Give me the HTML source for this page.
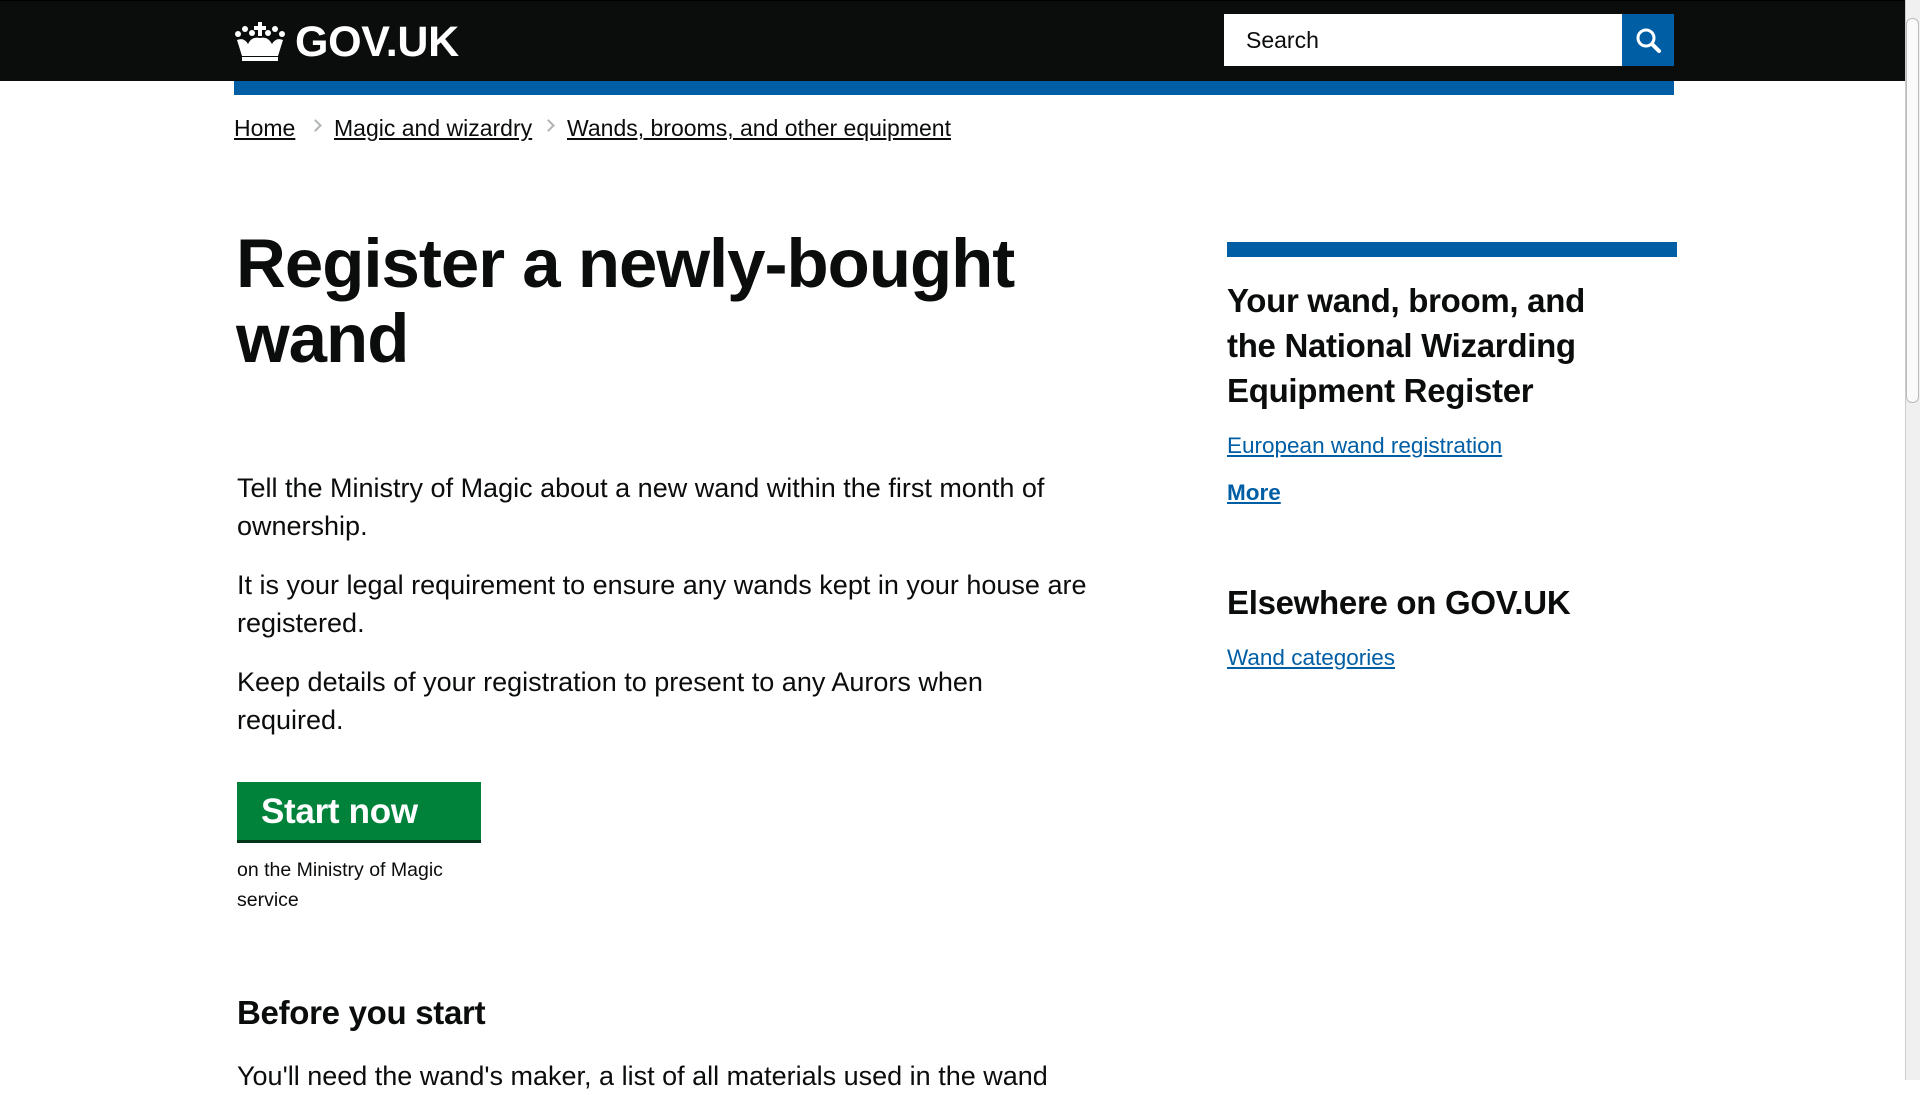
<!DOCTYPE html>
<html><head><meta charset="utf-8"><style>
*{margin:0;padding:0;box-sizing:border-box}
body{width:1920px;height:1080px;overflow:hidden;background:#fff;font-family:"Liberation Sans",Arial,sans-serif;color:#0b0c0c;position:relative}
.a{position:absolute;white-space:nowrap}
.hdr{position:absolute;left:0;top:0;width:1905px;height:81px;background:#0b0c0c;border-top:1px solid #000}
.bar{position:absolute;left:234px;top:81px;width:1440px;height:14px;background:#005ea5}
.sb{position:absolute;right:0;top:0;width:15px;height:1080px;background:#f0f0f0;border-left:1px solid #ccc}
.thumb{position:absolute;right:1px;top:18px;width:13px;height:385px;background:#fafafa;border:1px solid #bbb;border-radius:6px}
.bc a{color:#0b0c0c;text-decoration:underline;font-size:23px}
.chev{position:absolute;top:121px;width:9px;height:9px;border-right:2px solid #b1b4b6;border-top:2px solid #b1b4b6;transform:rotate(45deg)}
h1{position:absolute;left:236px;top:226px;font-size:69px;line-height:75px;font-weight:bold;letter-spacing:-1px}
p.b{position:absolute;left:237px;font-size:27px;line-height:38px;white-space:nowrap}
.btn{position:absolute;left:237px;top:782px;width:244px;height:58px;background:#00823b;box-shadow:0 3px 0 #003618;color:#fff;font-weight:bold;font-size:35px;line-height:60px;padding-left:24px;letter-spacing:-0.3px}
h2{position:absolute;font-weight:bold;font-size:33px;line-height:45px;letter-spacing:-0.3px;white-space:nowrap}
.lk{position:absolute;left:1227px;color:#005ea5;text-decoration:underline;font-size:22.5px;white-space:nowrap}
</style></head><body>
<div class="hdr"></div>
<svg class="a" style="left:234px;top:20px" width="52" height="42" viewBox="0 0 52 42">
<g fill="#fff">
<rect x="24" y="2" width="4" height="14"/><rect x="20" y="6" width="12" height="4"/>
<circle cx="4" cy="14" r="3"/><circle cx="11" cy="9" r="3"/><circle cx="18" cy="13" r="3"/>
<circle cx="34" cy="13" r="3"/><circle cx="41" cy="9" r="3"/><circle cx="48" cy="14" r="3"/>
<path d="M3 20 Q10 17 14 24 Q18 16 26 18 Q34 16 38 24 Q42 17 49 20 L44 36 L8 36 Z"/>
<rect x="8" y="37" width="36" height="4"/>
</g></svg>
<div class="a" style="left:295px;top:17px;color:#fff;font-weight:bold;font-size:43px;line-height:50px;letter-spacing:-0.3px">GOV.UK</div>
<div class="a" style="left:1224px;top:14px;width:398px;height:52px;background:#fff"></div>
<div class="a" style="left:1246px;top:27px;font-size:23px;color:#0b0c0c">Search</div>
<div class="a" style="left:1622px;top:14px;width:52px;height:52px;background:#005ea5"></div>
<svg class="a" style="left:1634px;top:26px" width="28" height="28" viewBox="0 0 28 28"><circle cx="12" cy="12" r="8" fill="none" stroke="#fff" stroke-width="3"/><path d="M18 18 L25 25" stroke="#fff" stroke-width="4" stroke-linecap="round"/></svg>
<div class="bar"></div>
<div class="bc">
<a class="a" style="left:234px;top:115px">Home</a>
<span class="chev" style="left:311px"></span>
<a class="a" style="left:334px;top:115px">Magic and wizardry</a>
<span class="chev" style="left:544px"></span>
<a class="a" style="left:567px;top:115px">Wands, brooms, and other equipment</a>
</div>
<h1>Register a newly-bought<br>wand</h1>
<p class="b" style="top:469px">Tell the Ministry of Magic about a new wand within the first month of<br>ownership.</p>
<p class="b" style="top:566px">It is your legal requirement to ensure any wands kept in your house are<br>registered.</p>
<p class="b" style="top:663px">Keep details of your registration to present to any Aurors when<br>required.</p>
<div class="btn">Start now</div>
<div class="a" style="left:237px;top:855px;font-size:19.5px;line-height:30px">on the Ministry of Magic<br>service</div>
<h2 style="left:237px;top:990px">Before you start</h2>
<p class="b" style="top:1057px">You'll need the wand's maker, a list of all materials used in the wand</p>
<div class="a" style="left:1227px;top:242px;width:450px;height:15px;background:#005ea5"></div>
<h2 style="left:1227px;top:278px">Your wand, broom, and<br>the National Wizarding<br>Equipment Register</h2>
<a class="lk" style="top:433px">European wand registration</a>
<a class="lk" style="top:480px;font-weight:bold">More</a>
<h2 style="left:1227px;top:580px">Elsewhere on GOV.UK</h2>
<a class="lk" style="top:645px">Wand categories</a>
<div class="sb"><div class="thumb"></div></div>
</body></html>
